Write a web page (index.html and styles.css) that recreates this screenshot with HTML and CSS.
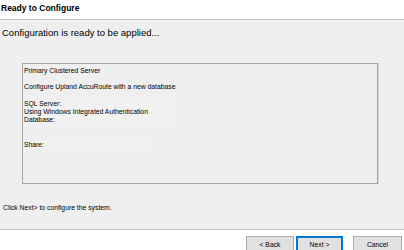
FILE: index.html
```html
<!DOCTYPE html>
<html>
<head>
<meta charset="utf-8">
<link rel="stylesheet" href="styles.css">
</head>
<body>
<div class="header"><div class="title">Ready to Configure</div></div>
<div class="main">
  <div class="lead">Configuration is ready to be applied...</div>
  <div class="summary">
    <div class="line">Primary Clustered Server</div>
    <div class="line">&nbsp;</div>
    <div class="line">Configure Upland AccuRoute with a new database</div>
    <div class="line">&nbsp;</div>
    <div class="line"><span class="mask w1">SQL Server:</span></div>
    <div class="line"><span class="mask w1">Using Windows Integrated Authentication</span></div>
    <div class="line"><span class="mask w1">Database:</span></div>
    <div class="line">&nbsp;</div>
    <div class="line">&nbsp;</div>
    <div class="line"><span class="mask w2">Share:</span></div>
  </div>
  <div class="hint">Click Next&gt; to configure the system.</div>
</div>
<div class="footer">
  <button class="btn back">&lt; Back</button>
  <button class="btn next">Next &gt;</button>
  <button class="btn cancel">Cancel</button>
</div>
</body>
</html>
```
FILE: styles.css
```css
html, body {
  margin: 0;
  padding: 0;
}
body {
  width: 404px;
  height: 250px;
  overflow: hidden;
  background: #ffffff;
  font-family: "Liberation Sans", Arial, sans-serif;
  color: #000;
}
.header {
  background: #ffffff;
  border-bottom: 1px solid #c2c2c2;
  box-sizing: border-box;
  height: 20px;
}
.title {
  font-weight: bold;
  font-size: 8.5px;
  line-height: 11px;
  padding: 3px 0 0 1px;
}
.main {
  height: 209px;
  background: #efefef;
  padding-top: 7px;
  box-sizing: border-box;
}
.lead {
  font-size: 9.5px;
  line-height: 12px;
  padding-left: 2px;
}
.summary {
  margin: 24px 0 0 22px;
  width: 356px;
  height: 121px;
  box-sizing: border-box;
  border: 1px solid #a5a5a5;
  box-shadow: 1px 0 0 #d6d6d6;
  padding: 3px 0 0 1px;
  font-size: 6.8px;
  line-height: 8.2px;
}
.line {
  height: 8.2px;
  white-space: nowrap;
}
.mask {
  display: inline-block;
  background: #f1f1f1;
}
.mask.w1 { width: 146px; }
.mask.w2 { width: 126px; }
.hint {
  margin-top: 20px;
  padding-left: 3px;
  font-size: 6.8px;
  line-height: 8px;
}
.footer {
  border-top: 1px solid #c4c4c4;
  background: #ffffff;
  display: flex;
  justify-content: flex-end;
  padding: 6px 2px 0 0;
}
.btn {
  height: 17px;
  margin: 0;
  padding: 0;
  box-sizing: border-box;
  background: #e1e1e1;
  border: 1px solid #adadad;
  font-family: "Liberation Sans", Arial, sans-serif;
  font-size: 6.8px;
  line-height: 13px;
  color: #000;
}
.back { width: 48px; }
.next {
  width: 47px;
  margin-left: 2px;
  border: 2px solid #0078d7;
  line-height: 11px;
}
.cancel {
  width: 49px;
  margin-left: 10px;
}
```
